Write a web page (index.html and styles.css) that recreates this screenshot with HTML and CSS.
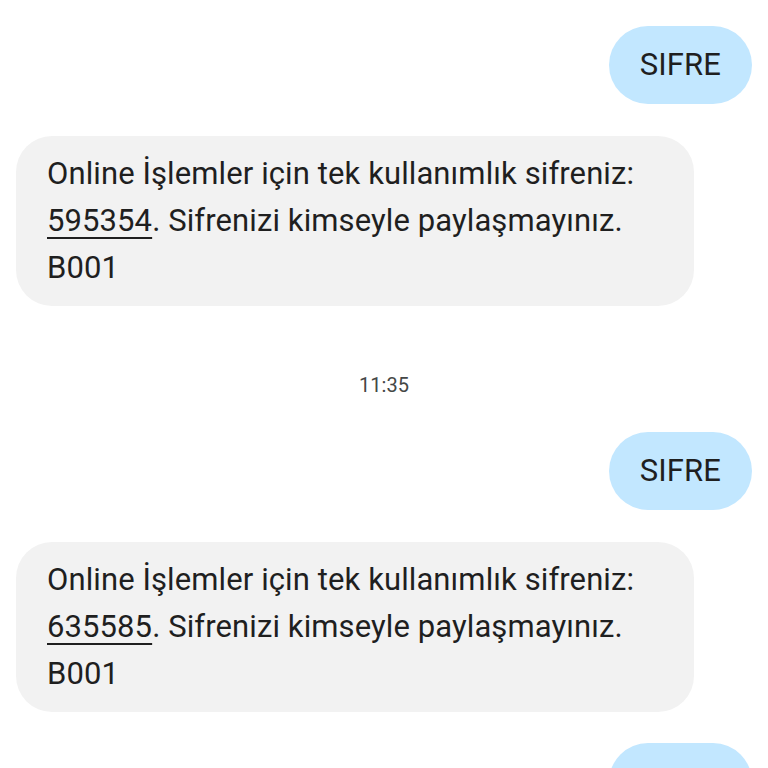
FILE: index.html
```html
<!DOCTYPE html>
<html lang="tr">
<head>
<meta charset="utf-8">
<link rel="stylesheet" href="styles.css">
</head>
<body>
<div class="thread">
  <div class="row sent"><div class="bubble out">SIFRE</div></div>
  <div class="row recv"><div class="bubble in">Online İşlemler için tek kullanımlık sifreniz: <span class="code">595354</span>. Sifrenizi kimseyle paylaşmayınız. B001</div></div>
  <div class="stamp">11:35</div>
  <div class="row sent"><div class="bubble out">SIFRE</div></div>
  <div class="row recv"><div class="bubble in">Online İşlemler için tek kullanımlık sifreniz: <span class="code">635585</span>. Sifrenizi kimseyle paylaşmayınız. B001</div></div>
  <div class="row sent"><div class="bubble out">SIFRE</div></div>
</div>
</body>
</html>
```
FILE: styles.css
```css
html, body {
  margin: 0;
  padding: 0;
  background: #ffffff;
  overflow: hidden;
  height: 768px;
}
.thread {
  display: flex;
  flex-direction: column;
  padding: 26px 16px 0 16px;
  font-family: Roboto, "Noto Sans", sans-serif;
  color: #1f1f1f;
}
.row {
  display: flex;
}
.row.sent {
  justify-content: flex-end;
}
.row.recv {
  justify-content: flex-start;
  margin-top: 32px;
}
.row.recv + .row.sent {
  margin-top: 31px;
}
.bubble {
  font-size: 31px;
  line-height: 47px;
  letter-spacing: 0.1px;
}
.bubble.out {
  background: #c2e7ff;
  border-radius: 39px;
  padding: 15px 31px 16px 31px;
}
.bubble.in {
  background: #f2f2f2;
  border-radius: 36px;
  padding: 14px 31px 15px 31px;
  width: 616px;
}
.code {
  text-decoration: underline;
  text-underline-offset: 6px;
  text-decoration-thickness: 2px;
}
.stamp {
  text-align: center;
  font-size: 20px;
  line-height: 24px;
  color: #444746;
  margin-top: 67px;
  margin-bottom: 35px;
}
```
